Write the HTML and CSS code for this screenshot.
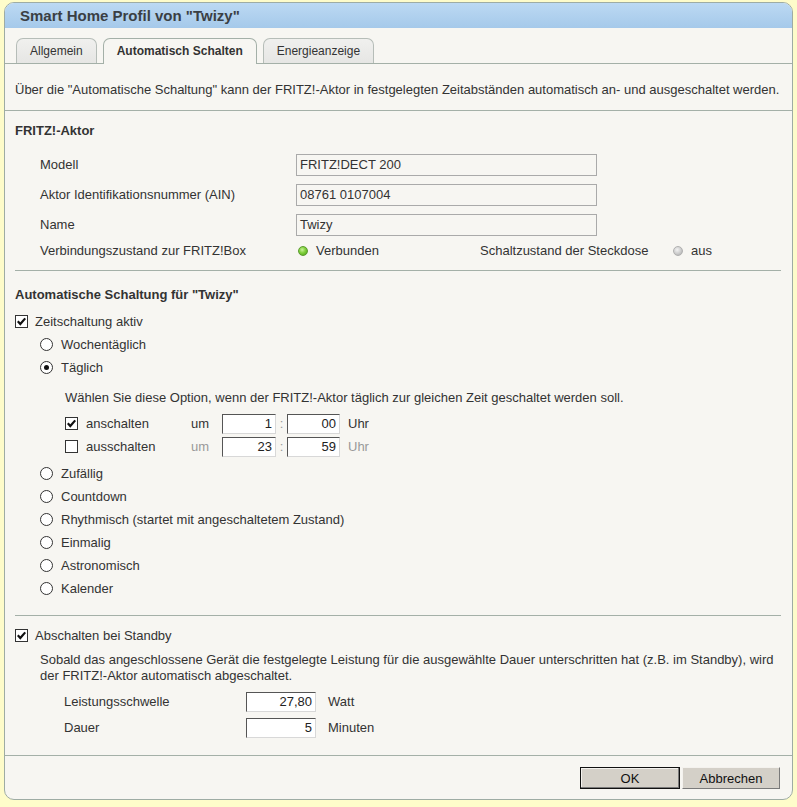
FILE: index.html
```html
<!DOCTYPE html>
<html lang="de">
<head>
<meta charset="utf-8">
<title>Smart Home Profil</title>
<link rel="stylesheet" href="styles.css">
</head>
<body>
<div class="dialog">
  <div class="titlebar">Smart Home Profil von "Twizy"</div>
  <div class="tabs">
    <div class="tab">Allgemein</div>
    <div class="tab active">Automatisch Schalten</div>
    <div class="tab">Energieanzeige</div>
  </div>
  <p class="intro">Über die "Automatische Schaltung" kann der FRITZ!-Aktor in festgelegten Zeitabständen automatisch an- und ausgeschaltet werden.</p>

  <div class="section">
    <h3 class="heading h-first">FRITZ!-Aktor</h3>
    <div class="fields">
      <div class="frow"><span class="flabel">Modell</span><span class="field">FRITZ!DECT 200</span></div>
      <div class="frow"><span class="flabel">Aktor Identifikationsnummer (AIN)</span><span class="field">08761 0107004</span></div>
      <div class="frow"><span class="flabel">Name</span><span class="field">Twizy</span></div>
      <div class="srow">
        <span class="flabel">Verbindungszustand zur FRITZ!Box</span>
        <span class="status s1"><span class="dot green"></span>Verbunden</span>
        <span class="slabel">Schaltzustand der Steckdose</span>
        <span class="status"><span class="dot grey"></span>aus</span>
      </div>
    </div>
    <div class="rule"></div>

    <h3 class="heading h-second">Automatische Schaltung für "Twizy"</h3>
    <div class="opt top"><span class="cb checked"><svg viewBox="0 0 13 13" width="13" height="13"><rect x="0.5" y="0.5" width="12" height="12" fill="#fff" stroke="#333"/><path d="M2.8 6.3 L5.3 9 L10.2 3.4" fill="none" stroke="#111" stroke-width="2.2"/></svg></span>Zeitschaltung aktiv</div>
    <div class="opt radio-row"><span class="rb"></span>Wochentäglich</div>
    <div class="opt radio-row"><span class="rb on"></span>Täglich</div>
    <div class="sub">
      <p class="hint">Wählen Sie diese Option, wenn der FRITZ!-Aktor täglich zur gleichen Zeit geschaltet werden soll.</p>
      <div class="trow first">
        <span class="tlabel"><span class="cb"><svg viewBox="0 0 13 13" width="13" height="13"><rect x="0.5" y="0.5" width="12" height="12" fill="#fff" stroke="#333"/><path d="M2.8 6.3 L5.3 9 L10.2 3.4" fill="none" stroke="#111" stroke-width="2.2"/></svg></span>anschalten</span>
        <span class="um">um</span>
        <span class="tin">1</span>
        <span class="colon">:</span>
        <span class="tin">00</span>
        <span class="uhr">Uhr</span>
      </div>
      <div class="trow off">
        <span class="tlabel"><span class="cb"><svg viewBox="0 0 13 13" width="13" height="13"><rect x="0.5" y="0.5" width="12" height="12" fill="#fff" stroke="#333"/></svg></span>ausschalten</span>
        <span class="um">um</span>
        <span class="tin">23</span>
        <span class="colon">:</span>
        <span class="tin">59</span>
        <span class="uhr">Uhr</span>
      </div>
    </div>
    <div class="opt radio-row after-sub"><span class="rb"></span>Zufällig</div>
    <div class="opt radio-row"><span class="rb"></span>Countdown</div>
    <div class="opt radio-row"><span class="rb"></span>Rhythmisch (startet mit angeschaltetem Zustand)</div>
    <div class="opt radio-row"><span class="rb"></span>Einmalig</div>
    <div class="opt radio-row"><span class="rb"></span>Astronomisch</div>
    <div class="opt radio-row"><span class="rb"></span>Kalender</div>
    <div class="rule r2"></div>

    <div class="opt standby"><span class="cb"><svg viewBox="0 0 13 13" width="13" height="13"><rect x="0.5" y="0.5" width="12" height="12" fill="#fff" stroke="#333"/><path d="M2.8 6.3 L5.3 9 L10.2 3.4" fill="none" stroke="#111" stroke-width="2.2"/></svg></span>Abschalten bei Standby</div>
    <p class="desc">Sobald das angeschlossene Gerät die festgelegte Leistung für die ausgewählte Dauer unterschritten hat (z.B. im Standby), wird<br>der FRITZ!-Aktor automatisch abgeschaltet.</p>
    <div class="prow first"><span class="plabel">Leistungsschwelle</span><span class="pin">27,80</span><span class="unit">Watt</span></div>
    <div class="prow"><span class="plabel">Dauer</span><span class="pin">5</span><span class="unit">Minuten</span></div>
  </div>

  <div class="footer">
    <button class="btn default" type="button">OK</button>
    <button class="btn" type="button">Abbrechen</button>
  </div>
</div>
</body>
</html>
```

FILE: styles.css
```css
* { box-sizing: border-box; }
html, body { margin: 0; }
body {
  background: #fefcca;
  padding: 2px 4px 0 4px;
  font-family: "Liberation Sans", Arial, sans-serif;
  font-size: 13px;
  line-height: 16px;
  color: #333;
}
.dialog {
  width: 789px;
  border: 1px solid #9eaca4;
  border-radius: 10px;
  background: #f7f6f2;
  overflow: hidden;
}
.titlebar {
  height: 25px;
  line-height: 25px;
  padding-left: 15px;
  font-size: 15px;
  font-weight: bold;
  color: #3a3f44;
  background: linear-gradient(#bcd9f3, #a5c9ea);
}
.tabs {
  display: flex;
  gap: 6px;
  padding: 10px 0 0 11px;
  border-bottom: 1px solid #a4b0a8;
}
.tab {
  height: 25px;
  line-height: 24px;
  padding: 0 13px;
  font-size: 12px;
  color: #333;
  border: 1px solid #b6bdb8;
  border-bottom: none;
  border-radius: 7px 7px 0 0;
  background: linear-gradient(#f0f0ee, #e6e6e4);
}
.tab.active {
  height: 26px;
  margin-bottom: -1px;
  padding: 0 13px;
  font-weight: bold;
  background: #f7f6f2;
  border-color: #a4b0a8;
}
.intro {
  margin: 0;
  padding: 18px 10px 12px 10px;
  border-bottom: 1px solid #a4b0a8;
}
.section { padding: 0 11px 0 10px; }
.heading {
  margin: 0;
  font-size: 13px;
  line-height: 16px;
  font-weight: bold;
  color: #333;
}
.h-first { margin-top: 12px; }
.h-second { margin-top: 16px; }
.fields { margin-top: 15px; padding-left: 25px; display: flex; flex-direction: column; gap: 8px; }
.frow { display: flex; align-items: center; height: 22px; }
.flabel { width: 256px; flex: none; }
.field {
  width: 301px;
  height: 22px;
  line-height: 20px;
  padding-left: 3px;
  border: 1px solid #aaa;
  background: #f7f6f2;
  color: #333;
}
.srow { display: flex; align-items: center; height: 16px; margin-top: -1px; }
.status { display: flex; align-items: center; }
.s1 { width: 184px; }
.slabel { width: 191px; }
.dot {
  width: 10px; height: 10px; border-radius: 50%;
  margin: 0 8px 0 2px;
}
.dot.green {
  background: radial-gradient(circle at 40% 35%, #c8f09a 0, #7fcf3a 45%, #4c9e1c 100%);
  border: 1px solid #5a9a2e;
}
.dot.grey {
  background: radial-gradient(circle at 40% 35%, #f2f2f2 0, #cfcfcf 50%, #a8a8a8 100%);
  border: 1px solid #b0b0b0;
}
.rule { border-top: 1px solid #a4b0a8; margin-top: 11px; }
.rule.r2 { margin-top: 15px; }
.opt { display: flex; align-items: center; height: 23px; }
.opt.top { margin-top: 7px; }
.cb { display: inline-flex; width: 13px; height: 13px; margin-right: 7px; flex: none; }
.cb svg { display: block; }
.radio-row { padding-left: 25px; }
.rb {
  width: 13px; height: 13px; border-radius: 50%;
  border: 1px solid #333; background: #fff;
  margin-right: 8px; flex: none;
  display: inline-flex; align-items: center; justify-content: center;
}
.rb.on::after {
  content: ""; width: 5px; height: 5px; border-radius: 50%; background: #111;
}
.sub { padding-left: 50px; }
.hint { margin: 11px 0 0 0; }
.trow { display: flex; align-items: center; height: 23px; }
.trow.first { margin-top: 6px; }
.tlabel { width: 126px; display: flex; align-items: center; }
.tlabel .cb { margin-right: 8px; }
.um { width: 31px; }
.tin {
  width: 54px; height: 20px; line-height: 18px;
  text-align: right; padding-right: 3px;
  background: #fff;
  border: 1px solid;
  border-color: #555 #d8d8d8 #d8d8d8 #555;
  color: #222;
}
.tin + .colon + .tin { width: 53px; }
.colon { width: 11px; text-align: center; color: #999; }
.uhr { margin-left: 8px; }
.trow.off .um, .trow.off .uhr { color: #999; }
.after-sub { margin-top: 4px; }
.standby { margin-top: 8px; }
.desc { margin: 5px 0 0 25px; }
.prow { display: flex; align-items: center; height: 20px; margin-top: 6px; padding-left: 49px; }
.prow.first { margin-top: 8px; }
.plabel { width: 182px; }
.pin {
  width: 70px; height: 20px; line-height: 18px;
  text-align: right; padding-right: 3px;
  background: #fff;
  border: 1px solid;
  border-color: #555 #d8d8d8 #d8d8d8 #555;
  color: #222;
}
.unit { margin-left: 12px; }
.footer {
  margin-top: 17px;
  border-top: 1px solid #a4b0a8;
  padding: 11px 12px 10px 0;
  display: flex;
  justify-content: flex-end;
  gap: 2px;
}
.btn {
  height: 22px;
  width: 98px;
  font-family: "Liberation Sans", Arial, sans-serif;
  font-size: 13px;
  color: #111;
  background: #d4d0c8;
  border: 1px solid;
  border-color: #f4f2ee #7a7a7a #7a7a7a #f4f2ee;
  padding: 0;
}
.btn.default {
  width: 100px;
  border: 1px solid #111;
  box-shadow: inset -1px -1px 0 #7a7a7a, inset 1px 1px 0 #f4f2ee;
}
```
